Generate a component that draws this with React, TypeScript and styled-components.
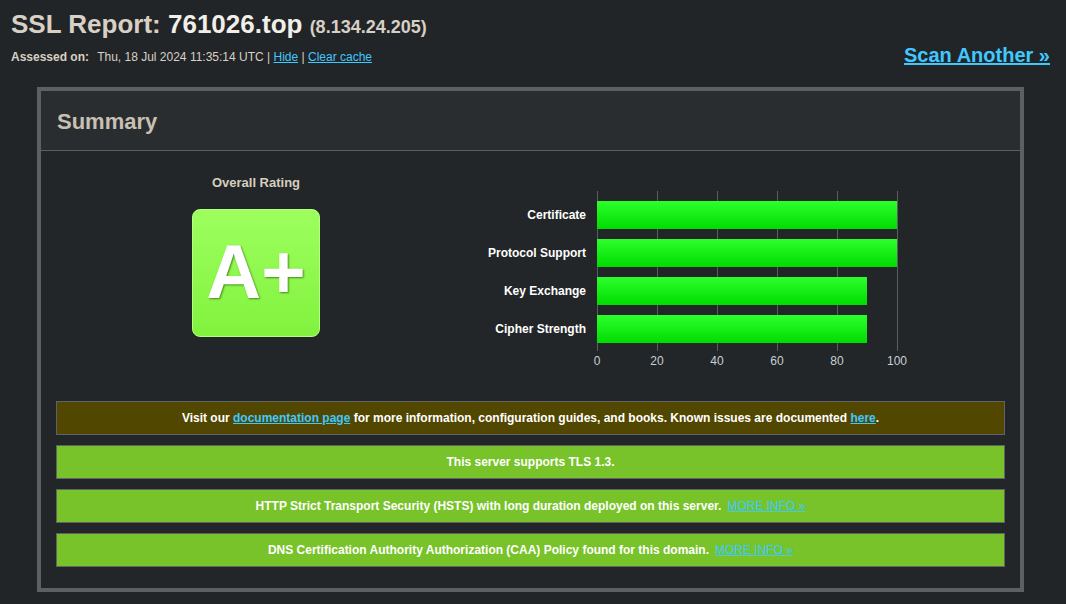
import React from "react";
import styled, { createGlobalStyle } from "styled-components";

const colors = {
  page: "#222528",
  panelBody: "#232628",
  panelHead: "#2a2d2f",
  border: "#5b6063",
  text: "#d8d0c4",
  white: "#ffffff",
  link: "#40c8ff",
  brown: "#524700",
  green: "#78c22a",
};

const GlobalStyle = createGlobalStyle`
  html, body {
    margin: 0;
    padding: 0;
    background: ${colors.page};
    font-family: "Liberation Sans", Arial, sans-serif;
    color: ${colors.text};
  }
  a {
    color: ${colors.link};
  }
`;

const Header = styled.header`
  display: flex;
  justify-content: space-between;
  align-items: flex-end;
  padding: 8px 16px 0 11px;
  height: 87px;
  box-sizing: border-box;
`;

const TitleBlock = styled.div`
  display: flex;
  flex-direction: column;
  align-self: flex-start;
`;

const Title = styled.h1`
  margin: 0;
  font-size: 26px;
  line-height: 32px;
  font-weight: bold;
  color: ${colors.text};
  .host {
    color: #f2eee8;
  }
  .ip {
    font-size: 18px;
  }
`;

const Assessed = styled.div`
  margin-top: 7px;
  font-size: 12px;
  line-height: 14px;
  b {
    margin-right: 5px;
  }
`;

const ScanAnother = styled.a`
  font-size: 20px;
  font-weight: bold;
  margin-bottom: 20px;
`;

const Panel = styled.section`
  width: 979px;
  margin-left: 37px;
  border: 4px solid ${colors.border};
  background: ${colors.panelBody};
`;

const PanelHead = styled.div`
  height: 60px;
  background: ${colors.panelHead};
  border-bottom: 1px solid ${colors.border};
  display: flex;
  align-items: center;
  padding-left: 16px;
  padding-top: 2px;
  box-sizing: border-box;
  font-size: 22px;
  font-weight: bold;
  color: #c8c0b4;
`;

const PanelBody = styled.div`
  padding: 0 15px 21px;
`;

const TopRow = styled.div`
  display: flex;
  height: 250px;
`;

const RatingCol = styled.div`
  width: 400px;
  display: flex;
  flex-direction: column;
  align-items: center;
  padding-top: 24px;
  box-sizing: border-box;
`;

const RatingLabel = styled.div`
  font-size: 13px;
  font-weight: bold;
  line-height: 16px;
  color: #d6cebf;
`;

const Grade = styled.div`
  margin-top: 18px;
  width: 128px;
  height: 128px;
  box-sizing: border-box;
  border-radius: 8px;
  border: 1px solid #b4ff80;
  background: linear-gradient(#9dff5e, #82f23e);
  display: flex;
  align-items: center;
  justify-content: center;
  color: ${colors.white};
  font-weight: bold;
  font-size: 76px;
  line-height: 1;
  padding-bottom: 2px;
  text-shadow: 1px 1px 2px rgba(40, 90, 0, 0.7);
`;

const Chart = styled.div`
  display: flex;
  padding-top: 40px;
`;

const Labels = styled.div`
  width: 130px;
  padding-top: 10px;
  display: flex;
  flex-direction: column;
  gap: 10px;
`;

const Label = styled.div`
  height: 28px;
  display: flex;
  align-items: center;
  justify-content: flex-end;
  font-size: 12px;
  font-weight: bold;
  color: ${colors.white};
`;

const PlotWrap = styled.div`
  margin-left: 11px;
  width: 300px;
`;

const Plot = styled.div`
  position: relative;
  height: 160px;
  padding-top: 10px;
  box-sizing: border-box;
  display: flex;
  flex-direction: column;
  gap: 10px;
  background-image: linear-gradient(to right, #5a5e62 1px, transparent 1px);
  background-size: 60px 100%;
  &::after {
    content: "";
    position: absolute;
    right: -1px;
    top: 0;
    bottom: 0;
    width: 1px;
    background: #5a5e62;
  }
`;

const Bar = styled.div`
  height: 28px;
  background: linear-gradient(#2dff2d, #00dc00);
  position: relative;
  z-index: 1;
`;

const Ticks = styled.div`
  display: flex;
  justify-content: space-between;
  margin: 3px -10px 0;
`;

const Tick = styled.span`
  width: 20px;
  text-align: center;
  font-size: 12px;
  line-height: 14px;
  color: #c6d0d6;
`;

const Notices = styled.div`
  display: flex;
  flex-direction: column;
  gap: 10px;
`;

const Notice = styled.div<{ $tone: "brown" | "green" }>`
  height: 34px;
  box-sizing: border-box;
  border: 1px solid #5f6366;
  background: ${(p) => (p.$tone === "brown" ? colors.brown : colors.green)};
  display: flex;
  align-items: center;
  justify-content: center;
  font-size: 12px;
  font-weight: bold;
  color: ${colors.white};
  a {
    color: ${colors.link};
  }
`;

const MoreInfo = styled.a`
  font-weight: normal;
  margin-left: 6px;
  && {
    color: #3ccaff;
  }
`;

const bars = [
  { label: "Certificate", value: 100 },
  { label: "Protocol Support", value: 100 },
  { label: "Key Exchange", value: 90 },
  { label: "Cipher Strength", value: 90 },
];

const ticks = [0, 20, 40, 60, 80, 100];

export default function App() {
  return (
    <>
      <GlobalStyle />
      <Header>
        <TitleBlock>
          <Title>
            SSL Report: <span className="host">761026.top</span>{" "}
            <span className="ip">(8.134.24.205)</span>
          </Title>
          <Assessed>
            <b>Assessed on:</b> Thu, 18 Jul 2024 11:35:14 UTC | <a href="#">Hide</a> |{" "}
            <a href="#">Clear cache</a>
          </Assessed>
        </TitleBlock>
        <ScanAnother href="#">Scan Another »</ScanAnother>
      </Header>

      <Panel>
        <PanelHead>Summary</PanelHead>
        <PanelBody>
          <TopRow>
            <RatingCol>
              <RatingLabel>Overall Rating</RatingLabel>
              <Grade>A+</Grade>
            </RatingCol>
            <Chart>
              <Labels>
                {bars.map((b) => (
                  <Label key={b.label}>{b.label}</Label>
                ))}
              </Labels>
              <PlotWrap>
                <Plot>
                  {bars.map((b) => (
                    <Bar key={b.label} style={{ width: `${b.value * 3}px` }} />
                  ))}
                </Plot>
                <Ticks>
                  {ticks.map((t) => (
                    <Tick key={t}>{t}</Tick>
                  ))}
                </Ticks>
              </PlotWrap>
            </Chart>
          </TopRow>

          <Notices>
            <Notice $tone="brown">
              <span>
                Visit our <a href="#">documentation page</a> for more information,
                configuration guides, and books. Known issues are documented{" "}
                <a href="#">here</a>.
              </span>
            </Notice>
            <Notice $tone="green">This server supports TLS 1.3.</Notice>
            <Notice $tone="green">
              HTTP Strict Transport Security (HSTS) with long duration deployed on this
              server.
              <MoreInfo href="#">MORE INFO »</MoreInfo>
            </Notice>
            <Notice $tone="green">
              DNS Certification Authority Authorization (CAA) Policy found for this
              domain.
              <MoreInfo href="#">MORE INFO »</MoreInfo>
            </Notice>
          </Notices>
        </PanelBody>
      </Panel>
    </>
  );
}
